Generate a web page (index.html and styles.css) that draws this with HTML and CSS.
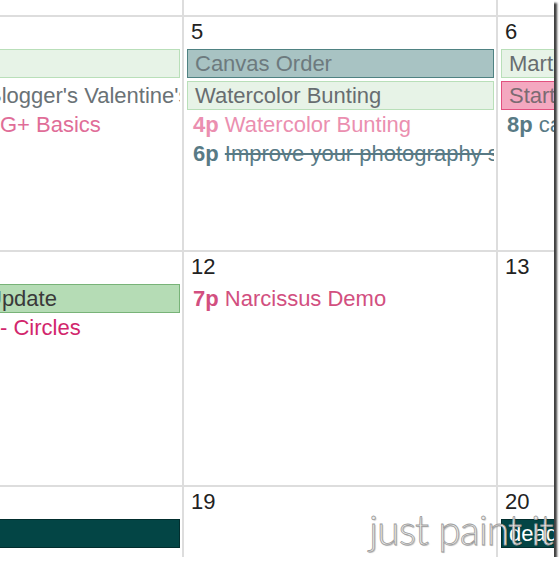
FILE: index.html
```html
<!DOCTYPE html>
<html>
<head>
<meta charset="utf-8">
<link rel="stylesheet" href="styles.css">
</head>
<body>
<div class="frame">
  <div class="cal">
    <div class="cell"></div>
    <div class="cell"></div>
    <div class="cell"></div>

    <div class="cell left">
      <div class="dn">&nbsp;</div>
      <div class="ev green row"></div>
      <div class="txt row gray ind-b">Blogger's Valentine's Day</div>
      <div class="txt pink ind-g">G+ Basics</div>
    </div>
    <div class="cell">
      <div class="dn">5</div>
      <div class="ev teal row">Canvas Order</div>
      <div class="ev green row">Watercolor Bunting</div>
      <div class="txt lpink"><b>4p</b> Watercolor Bunting</div>
      <div class="txt slate"><b>6p</b> <s>Improve your photography skills</s></div>
    </div>
    <div class="cell">
      <div class="dn">6</div>
      <div class="ev green row">Martha</div>
      <div class="ev rose row">Start</div>
      <div class="txt slate"><b>8p</b> canvas</div>
    </div>

    <div class="cell left">
      <div class="dn">&nbsp;</div>
      <div class="ev mint row ind-u">Update</div>
      <div class="txt magenta ind-g">- Circles</div>
    </div>
    <div class="cell">
      <div class="dn">12</div>
      <div class="txt row rasp"><b>7p</b> Narcissus Demo</div>
    </div>
    <div class="cell">
      <div class="dn">13</div>
    </div>

    <div class="cell left">
      <div class="dn">&nbsp;</div>
      <div class="ev dark row"></div>
      <div class="txt magenta2 ind-l low">a live session</div>
    </div>
    <div class="cell">
      <div class="dn">19</div>
    </div>
    <div class="cell">
      <div class="dn">20</div>
      <div class="ev dark row">deadline</div>
      <div class="txt purple low"><b>8:30p</b></div>
    </div>
  </div>
  <div class="watermark">just paint it</div>
</div>
</body>
</html>
```

FILE: styles.css
```css
html, body {
  margin: 0;
  padding: 0;
  background: #ffffff;
}

.frame {
  position: relative;
  width: 554px;
  height: 557px;
  overflow: hidden;
  box-shadow: 3px 3px 2px rgba(0, 0, 0, 0.75);
  background: #ffffff;
}

.cal {
  display: grid;
  grid-template-columns: 182px 312px 312px;
  grid-template-rows: 15px 233px 233px 233px;
  gap: 2px;
  background: #dddddd;
  font-family: "Liberation Sans", Arial, sans-serif;
  font-size: 22px;
  color: #222222;
}

.cell {
  background: #ffffff;
  display: flex;
  flex-direction: column;
  padding: 0 2px 0 3px;
  overflow: hidden;
  min-width: 0;
}

.cell.left {
  padding-left: 0;
}

.dn {
  line-height: 25px;
  margin-top: 2px;
  margin-bottom: 2px;
  padding-left: 4px;
  color: #222222;
}

.ev,
.txt {
  white-space: nowrap;
  overflow: hidden;
  flex: none;
}

.ev {
  height: 29px;
  box-sizing: border-box;
  border: 1px solid transparent;
  line-height: 27px;
  padding: 0 7px;
}

.txt {
  line-height: 29px;
  padding-left: 6px;
}

.row {
  margin-top: 3px;
}

.low {
  margin-top: 3px;
}

.left .ev {
  border-left: 0;
}

.ind-b { text-indent: -19px; }
.ind-g { text-indent: -6px; }
.ind-u { text-indent: -21px; }
.ind-l { text-indent: -10px; }

.teal {
  background: #a8c3c3;
  border-color: #4f8282;
  color: #6d7a7e;
}

.green {
  background: #e7f3e7;
  border-color: #b9dfb9;
  color: #676d70;
}

.rose {
  background: #f4a8c0;
  border-color: #e2517f;
  color: #7b6b72;
}

.mint {
  background: #b5dcb5;
  border-color: #78b378;
  color: #3a3a3a;
}

.dark {
  background: #034545;
  border-color: #022e2e;
  color: #ffffff;
}

.gray { color: #6a7276; }
.pink { color: #e06d98; }
.lpink { color: #eb8fb0; }
.rasp { color: #d24f80; }
.magenta { color: #d2266c; }
.magenta2 { color: #e02aa0; }
.purple { color: #9b30d0; }
.slate { color: #587a85; }

.txt b {
  font-weight: bold;
}

.watermark {
  position: absolute;
  left: 369px;
  top: 505px;
  font-family: Lato, "DejaVu Sans", sans-serif;
  font-weight: 300;
  font-size: 41px;
  letter-spacing: -1px;
  color: #eeeeee;
  -webkit-text-stroke: 0.8px #9c9c9c;
  text-shadow: 1px 1px 1px rgba(0, 0, 0, 0.25);
  white-space: nowrap;
}
```
